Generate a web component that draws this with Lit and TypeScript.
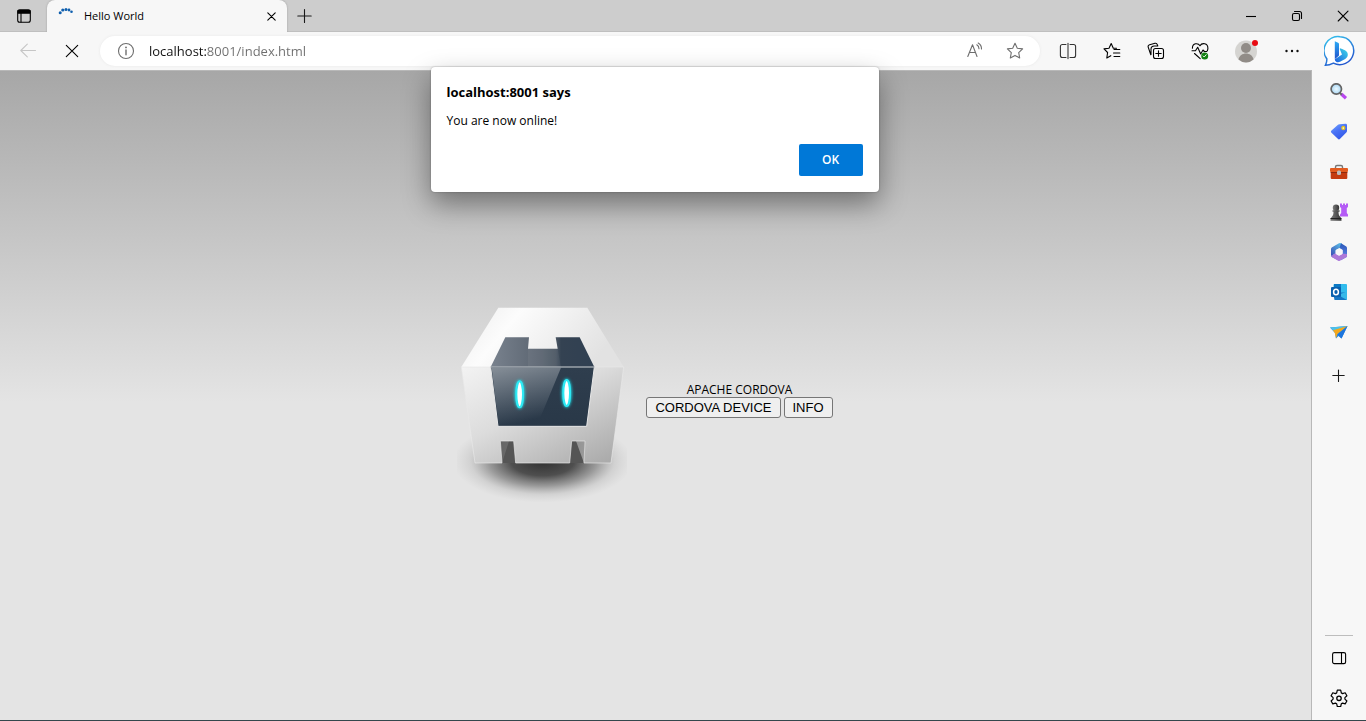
import { LitElement, html, svg, css } from "lit";
import { customElement } from "lit/decorators.js";

const icon = (size: number, body: unknown) => html`<svg
  width=${size} height=${size} viewBox="0 0 ${size} ${size}" fill="none"
  stroke="currentColor" stroke-width="1.1" stroke-linecap="round" stroke-linejoin="round"
  aria-hidden="true">${body}</svg>`;

const starPath = "M10 2.3 12.3 7.2 17.6 7.9 13.7 11.6 14.7 17 10 14.4 5.3 17 6.3 11.6 2.4 7.9 7.7 7.2Z";

const icons = {
  tabActions: icon(16, svg`<rect x="1.7" y="1.7" width="12.6" height="12.6" rx="2"/><path d="M2 2.5h12v2.6H2z" fill="currentColor"/><path d="M5 5v9"/>`),
  spinner: svg`<svg width="16" height="16" viewBox="0 0 16 16" fill="#0f5fae" aria-hidden="true"><circle cx="2.200" cy="4.800" r="1.500"/><circle cx="4.800" cy="2" r="1.600"/><circle cx="8" cy="1.600" r="1.500"/><circle cx="11" cy="2" r="1.400"/><circle cx="13.500" cy="3.800" r="1.300"/></svg>`,
  closeTab: icon(16, svg`<path d="M4.800 4.800l7.400 7.400M12.200 4.800l-7.400 7.400"/>`),
  plus: icon(16, svg`<path d="M7.500 1.500v13M.800 8h13.400" stroke="#1a1a1a"/>`),
  smallPlus: icon(16, svg`<path d="M7.500 2v11.500M1.800 7.500h11.400" stroke="#1a1a1a"/>`),
  minimise: icon(16, svg`<path d="M3 8.500h10" stroke-linecap="butt"/>`),
  restore: icon(16, svg`<rect x="3.500" y="5.500" width="7" height="7" rx="1.500"/><path d="M5.500 3.500h5a2 2 0 0 1 2 2v5"/>`),
  closeWindow: icon(16, svg`<path d="M3.200 3.200l9.800 9.800M13 3.200l-9.800 9.800"/>`),
  back: icon(16, svg`<path d="M15.500 7.500H.8M7.300 1.200.8 7.500l6.500 6.300" stroke="#c6c6c6"/>`),
  stop: icon(16, svg`<path d="M2.300 2.300l11.400 11.400M13.700 2.300 2.300 13.700"/>`),
  info: icon(18, svg`<g stroke="#6e6e6e"><circle cx="9" cy="9" r="7.500"/><path d="M9 8v4.700" stroke-width="1.400"/><circle cx="9" cy="5.400" r=".4"/></g>`),
  readAloud: icon(20, svg`<g stroke="#6e6e6e"><path d="M2.800 15.500 7.500 3.800 12 15.500M4.300 11.500h6.200"/><path d="M11.800 3.800c1.500.9 2.200 2.200 2.200 3.900M13.200 2c2.300 1.300 3.300 3.400 3.300 5.900"/></g>`),
  star: icon(20, svg`<path stroke="#6e6e6e" d=${starPath}/>`),
  split: icon(20, svg`<path d="M8 3.500H4.400a2 2 0 0 0-2 2v9a2 2 0 0 0 2 2H8M12 3.500h3.600a2 2 0 0 1 2 2v9a2 2 0 0 1-2 2H12" stroke="#333"/><path d="M10 2.500v15" stroke="#6a6a6a" stroke-width="1.500"/>`),
  favourites: icon(20, svg`<path d="M14.500 7.300 11.300 7.200 9.200 2.500 7 7.200 2 7.900 5.600 11.500 4.800 17 8.800 14.700M12 8.500h5.800M11.500 12h6.300M12 15.500h5.800"/>`),
  collections: icon(20, svg`<rect x="7.500" y="7.500" width="10" height="10" rx="2"/><path d="M12.500 9.800v5.400M9.800 12.500h5.400M4.800 13.800 2.200 6.100C1.800 4.800 2.600 4 3.600 3.700L9 2.300c1.300-.3 2 .3 2.400 1.500l.4 1.200H8.300C6 5 5 6.300 5 8.200v5.300"/>`),
  health: icon(20, svg`<path d="M2.400 7.200C2.500 1.700 8.200 1.700 10 4.800 11.800 1.500 18 1.700 17.900 7.400c0 .9-.3 1.700-.7 2.500M2 9.700h3.500l2.200-3.400 3 6.700 2.300-4 1.400 1.500h2.100M4.500 12.500l5.700 5.200"/><circle cx="14.700" cy="15" r="3.500" fill="#138113" stroke="none"/><path d="m13.200 15 1 1 2-2.300" stroke="#fff" stroke-width=".9"/>`),
  profile: svg`<svg width="24" height="24" viewBox="0 0 24 24" aria-hidden="true"><circle cx="12" cy="12.500" r="11" fill="#d5d4d1"/><circle cx="12" cy="9" r="5" fill="#918c87"/><path d="M4.500 20.500c1.500-8 13.500-8 15 0a11 11 0 0 1-15 0z" fill="#918c87"/><circle cx="21" cy="4" r="3" fill="#e80b12"/></svg>`,
  more: svg`<svg width="16" height="16" viewBox="0 0 16 16" fill="#111" aria-hidden="true"><circle cx="2.500" cy="8" r="1.200"/><circle cx="8" cy="8" r="1.200"/><circle cx="13.500" cy="8" r="1.200"/></svg>`,
  bing: svg`<svg width="32" height="32" viewBox="0 0 32 32" aria-hidden="true">
    <defs><linearGradient id="bg" x1="0" y1="0" x2=".5" y2="1"><stop stop-color="#35c7ee"/><stop offset="1" stop-color="#2459cf"/></linearGradient>
    <linearGradient id="bl" x1="0" y1="0" x2="0" y2="1"><stop stop-color="#2baaf5"/><stop offset="1" stop-color="#2052cb"/></linearGradient>
    <linearGradient id="bt" x1="0" y1="1" x2="1" y2="0"><stop stop-color="#1b5be0"/><stop offset="1" stop-color="#3edce8"/></linearGradient></defs>
    <path d="M16 1.700a14 14 0 1 1-6.600 26.500c-2.300 1.200-5 2.100-8 2.100 1.300-2.500 1.500-4.300 1.500-6.300A14 14 0 0 1 16 1.700z" fill="#fff" stroke="url(#bg)" stroke-width="1.500"/>
    <path d="m10.800 6.300 3.300 1.500c.6.300.9.700.9 1.300v10.800c0 .5-.1.800-.5 1.200l-3.700 3.100z" fill="url(#bl)"/>
    <path d="M10.800 24.200 18 19.500l-2.200-5.300c-.2-.7.200-1 .8-.8 4.800 1.500 7.200 3 7.200 6.200 0 2-.9 3.400-2.600 4.400L16 26.800c-2 1.100-5 .4-5.200-2.600z" fill="url(#bt)"/></svg>`,
  panel: icon(16, svg`<rect x="1.600" y="2.600" width="13" height="11" rx="1.700"/><path d="M10.500 3v10.500"/>`),
  gear: icon(20, svg`<path d="M8.300 2.200h3.400l.6 2.700 1.300.7 2.600-.8 1.700 2.900-2 1.900v1.500l2 1.900-1.700 2.900-2.600-.8-1.300.7-.6 2.700H8.300l-.6-2.700-1.300-.7-2.600.8L2.100 13l2-1.900V9.600l-2-1.900 1.700-2.900 2.600.8 1.300-.7z" stroke-width="1.200"/><circle cx="10" cy="10.300" r="2.200" stroke-width="1.300"/>`),
};

const art = (body: unknown) => html`<svg width="18" height="18" viewBox="0 0 18 18" aria-hidden="true">${body}</svg>`;

const apps = [
  { name: "Search", art: art(svg`<defs><radialGradient id="lens"><stop stop-color="#eefaff"/><stop offset="1" stop-color="#a7d6f4"/></radialGradient></defs><path d="m11.300 11 4.700 4.300" stroke="#b947ef" stroke-width="3.200"/><path d="m9.800 9.700 2 2" stroke="#666" stroke-width="2"/><circle cx="6.300" cy="6" r="5.200" fill="url(#lens)" stroke="#656565" stroke-width="1.700"/>`) },
  { name: "Shopping", art: art(svg`<defs><linearGradient id="tag" x1="0" y1="0" x2=".6" y2="1"><stop stop-color="#77a9ff"/><stop offset=".5" stop-color="#4a73f6"/><stop offset="1" stop-color="#3459e8"/></linearGradient></defs><path d="M9.500 1.200 15.500.8c1 0 1.500.5 1.500 1.500v5.500c0 .7-.2 1.200-.7 1.700l-6.200 6.300c-.8.8-1.500.8-2.300 0L1.500 9.800c-.8-.8-.8-1.400 0-2.200l6.200-5.700c.5-.5 1-.7 1.800-.7z" fill="url(#tag)"/><circle cx="13.300" cy="5" r="1.500" fill="#f7f7f7" stroke="#e3c11c" stroke-width="1.300"/>`) },
  { name: "Tools", art: art(svg`<path d="M5.500 6V4q0-1.500 1.500-1.500h4Q12.500 2.500 12.500 4v2" fill="none" stroke="#777" stroke-width="1.400"/><rect y="5" width="18" height="4" rx="1" fill="#e25b1f"/><path d="M.7 9h16.600v6q0 1-1 1H1.700q-1 0-1-1z" fill="#c43b10"/><path d="M.7 9h16.600v1H.7z" fill="#8e290c"/><rect x="7" y="7.500" width="4" height="4.500" rx="1.500" fill="#bbb"/>`) },
  { name: "Games", art: art(svg`<defs><linearGradient id="pawn"><stop stop-color="#7b7b7b"/><stop offset="1" stop-color="#333"/></linearGradient></defs><path d="M10 .5h2V2h1V.5h2V2h1V.500h2v3.500l-1.200 1v5l1.200 1.500v2h-8v-2l1.200-1.500V5L10 4z" fill="#b55cf6"/><circle cx="6" cy="4.700" r="3.200" fill="url(#pawn)"/><path d="M2.500 7.200h7v1.500h-1c0 2.500.5 4 2 5.500.9.900 1 1.500 1 3.500H.5c0-2 .1-2.600 1-3.500 1.500-1.500 2-3 2-5.500h-1z" fill="url(#pawn)"/><path d="M.5 15.500h11" stroke="#222"/>`) },
  { name: "Microsoft 365", art: art(svg`<defs><linearGradient id="ma" x1="0" y1="1" x2="1" y2="0"><stop stop-color="#3a4db4"/><stop offset="1" stop-color="#5cc5ea"/></linearGradient><linearGradient id="mb"><stop stop-color="#7f61cf"/><stop offset="1" stop-color="#c79af0"/></linearGradient><linearGradient id="mc" x1="0" y1="0" x2="0" y2="1"><stop stop-color="#2857b8"/><stop offset="1" stop-color="#6e8df0"/></linearGradient></defs><path d="M9 .3 1.700 4.500Q1 5 1 6v7l4.500-2.500V7.200L12 3.500V.800Q10.500-.4 9 .3z" fill="url(#ma)"/><path d="M1 11v1.500q0 1 .8 1.500L8 17.600q1 .6 2 0l4.500-2.600-3-3L9 13 5 10.500 1 13z" fill="url(#mb)"/><path d="M11 .3 16.300 3.500Q17 4 17 5v8q0 .8-.7 1.200L11 17.300l-1-3 2.800-3.500V7L9.500 5z" fill="url(#mc)"/><path d="M5 10.500 9 13l3.800-2.200L17 11v2q0 .8-.7 1.200L10 17.600q-1 .6-2 0L1.800 14z" fill="#ad79d8"/><circle cx="9" cy="9" r="3.200" fill="#f7f7f7"/>`) },
  { name: "Outlook", art: art(svg`<path d="M4.500 1H16q1 0 1 1v9H3.500V2q0-1 1-1z" fill="#32bced"/><path d="M4 1h7v5H4z" fill="#0b78c4"/><path d="M3 9.500h14V16q0 1-1 1H4.500z" fill="#1475c4"/><path d="m8 12 9-3.500V17z" fill="#36b9e9"/><rect x="1" y="4" width="10" height="10" rx="1" fill="#0960ae"/><ellipse cx="6" cy="9" rx="2.400" ry="2.800" fill="none" stroke="#fff" stroke-width="1.500"/>`) },
  { name: "Drop", art: art(svg`<path d="M0 4.500 17.500 3 11.500 15.500 8.500 13 6 15.500 5 10z" fill="#258be8"/><path d="M0 4.500 17.500 3 5 9z" fill="#4dc2e9"/><path d="m3 7.300 14.500-4.300-10 8L6 15.500 4.800 10z" fill="#f4a81d"/><path d="M17.500 3 7.500 11.500l4 4z" fill="#1d75dd"/>`) },
];

const cordovaLogo = html`<svg width="170" height="200" viewBox="52 31 510 600" role="img" aria-label="Cordova">
  <defs>
    <linearGradient id="top" x1="0" y1="0" x2="1" y2=".3"><stop stop-color="#ececec"/><stop offset=".35" stop-color="#fcfcfc"/><stop offset="1" stop-color="#e2e2e2"/></linearGradient>
    <linearGradient id="front" x1="0" y1="0" x2=".9" y2="1"><stop stop-color="#f3f3f3"/><stop offset=".45" stop-color="#dcdcdc"/><stop offset="1" stop-color="#aaaaaa"/></linearGradient>
    <linearGradient id="visor"><stop stop-color="#79828e"/><stop offset=".5" stop-color="#59636f"/><stop offset=".63" stop-color="#4a5663"/><stop offset=".68" stop-color="#344252"/><stop offset="1" stop-color="#304052"/></linearGradient>
    <linearGradient id="face" x1="0" y1="0" x2="0" y2="1"><stop stop-color="#2f3e4e"/><stop offset="1" stop-color="#293848"/></linearGradient>
    <linearGradient id="gloss" x1="0" y1="0" x2=".3" y2="1"><stop stop-color="#fff" stop-opacity=".42"/><stop offset="1" stop-color="#fff" stop-opacity="0"/></linearGradient>
    <linearGradient id="leg"><stop stop-color="#666"/><stop offset="1" stop-color="#999"/></linearGradient>
    <radialGradient id="shadow"><stop stop-color="#303030"/><stop offset=".35" stop-color="#3a3a3a" stop-opacity=".88"/><stop offset=".6" stop-color="#505050" stop-opacity=".5"/><stop offset=".8" stop-color="#707070" stop-opacity=".16"/><stop offset="1" stop-color="#909090" stop-opacity="0"/></radialGradient>
    <filter id="glow" x="-2" y="-.5" width="5" height="2"><feGaussianBlur stdDeviation="5"/></filter>
    <filter id="soft" x="-.5" y="-.1" width="2" height="1.200"><feGaussianBlur stdDeviation="2"/></filter>
  </defs>
  <ellipse cx="309" cy="500" rx="270" ry="124" fill="url(#shadow)"/>
  <path d="M182 439h42l6 66h-44zM394 439h42l-2 66h-46z" fill="#555"/>
  <path d="M182 439h26l-21 66zM436 439h-27l24 66z" fill="url(#leg)"/>
  <path d="M176 39H443L552 217H65z" fill="url(#top)"/>
  <path d="M65 217H552L514 505H433L436 439H396L390 505H228L222 439H182L187 505H106z" fill="url(#front)" stroke="#e8e8e8" stroke-width="2"/>
  <path d="M197 128H268L265 162H354L348 128H420L464 217H153z" fill="url(#visor)"/>
  <path d="M265 162h89l10 55H265z" fill="#fff" opacity=".05"/>
  <path d="M153 217H464L441 395H175z" fill="url(#face)" stroke="#e8e8e8" stroke-width="3"/>
  <path d="M156 219H364L293 390H177z" fill="url(#gloss)"/>
  <path d="M153 217H464" stroke="#6a7683" stroke-width="2"/>
  <g fill="#1ee4f2" filter="url(#glow)"><ellipse cx="240" cy="299" rx="15" ry="43"/><ellipse cx="381" cy="295" rx="15" ry="43"/></g>
  <g fill="#fff" stroke="#2eeaf5" stroke-width="6" filter="url(#soft)"><ellipse cx="240" cy="299" rx="10" ry="39"/><ellipse cx="381" cy="295" rx="10" ry="39"/></g>
</svg>`;

@customElement("app-root")
export class AppRoot extends LitElement {
  static styles = css`
    :host {
      display: flex;
      flex-direction: column;
      height: 100vh;
      box-sizing: border-box;
      border-bottom: 1px solid #34474c;
      background: #f7f7f7;
      color: #000;
      font: 12px/16px "Segoe UI", "Open Sans", sans-serif;
    }
    svg { display: block; flex: none; }
    button { font: inherit; color: inherit; }
    .icon-button {
      display: flex;
      align-items: center;
      justify-content: center;
      flex: none;
      width: 44px;
      height: 32px;
      padding: 0;
      border: 0;
      background: none;
    }
    .tabs {
      display: flex;
      flex: none;
      height: 32px;
      background: #cdcdcd;
      box-shadow: inset 0 -1px #bfbfbf;
    }
    .tab-actions { width: 47px; }
    .tab {
      display: flex;
      align-items: center;
      flex: 0 1 240px;
      box-sizing: border-box;
      padding-left: 11px;
      border-radius: 8px 8px 0 0;
      background: #f7f7f7;
      box-shadow: 0 0 2px #999;
      clip-path: inset(0 -3px 0 -3px);
      font-size: 11px;
    }
    .tab-title { flex: 1; padding-left: 10px; }
    .tab-close { width: 32px; }
    .new-tab { width: 36px; }
    .window-controls { display: flex; margin-left: auto; }
    .window-controls .icon-button { width: 46px; }
    .toolbar {
      display: flex;
      align-items: center;
      flex: none;
      height: 38px;
      background: #f7f7f7;
    }
    .back { margin-left: 6px; }
    .address {
      display: flex;
      align-items: center;
      flex: 1;
      min-width: 0;
      height: 30px;
      margin: 0 6px;
      padding: 0 5px 0 17px;
      border-radius: 15px;
      background: #fff;
      box-shadow: 0 0 3px #e8e8e8;
    }
    .address .icon-button { width: 40px; height: 30px; }
    .address .site-info { width: 18px; }
    .url {
      flex: 1;
      min-width: 0;
      padding: 0;
      margin-left: 14px;
      border: 0;
      outline: 0;
      font: 13px/20px "Segoe UI", "Open Sans", sans-serif;
      color: transparent;
      background: linear-gradient(to right, #111 58px, #6e6e6e 58px);
      background-clip: text;
      -webkit-background-clip: text;
    }
    .profile { width: 48px; }
    .side-column { width: 52px; }
    .body { display: flex; flex: 1; min-height: 0; }
    .page {
      position: relative;
      display: flex;
      align-items: center;
      justify-content: center;
      flex: 1;
      box-sizing: border-box;
      padding: 18px 2px 0 0;
      border: 1px solid #b8b8b8;
      border-width: 1px 1px 0 0;
      background: linear-gradient(to bottom, #a7a7a7 0%, #e4e4e4 51%);
    }
    .details { width: 225px; text-align: center; }
    .heading { margin: 0; font-size: 12px; font-weight: 400; line-height: 14px; }
    .actions { display: flex; justify-content: center; gap: 3px; padding-bottom: 8px; }
    .action {
      height: 21px;
      padding: 0 8px;
      border: 1px solid #767676;
      border-radius: 3px;
      background: #efefef;
      font: 13px/19px "Liberation Sans", Arial, sans-serif;
    }
    .alert-layer {
      position: absolute;
      inset: -4px 2px auto 0;
      display: flex;
      justify-content: center;
    }
    .alert {
      box-sizing: border-box;
      width: 448px;
      max-width: 100%;
      padding: 16px;
      border-radius: 4px;
      background: #fff;
      box-shadow: 0 0 2px rgba(0, 0, 0, 0.3), 0 12px 28px rgba(0, 0, 0, 0.4);
    }
    .alert-title { margin: 0; font-size: 13px; line-height: 18px; font-weight: 700; }
    .alert-text { margin: 10px 0 13px; line-height: 20px; }
    .alert-actions { display: flex; justify-content: flex-end; }
    .ok {
      width: 64px;
      height: 32px;
      padding: 0;
      border: 0;
      border-radius: 2px;
      background: #0078d7;
      color: #fff;
      font-weight: 600;
    }
    .sidebar {
      display: flex;
      flex-direction: column;
      align-items: center;
      flex: none;
      width: 54px;
      padding-top: 2px;
      box-sizing: border-box;
    }
    .sidebar .icon-button { height: 40px; }
    .sidebar .add { margin-top: 4px; }
    .divider { width: 28px; height: 1px; margin: auto 0 2px; border: 0; background: #bdbdbd; }
    .settings { margin-bottom: 2px; }
  `;

  render() {
    return html`
      <header class="tabs">
        <button class="icon-button tab-actions" aria-label="Tab actions">${icons.tabActions}</button>
        <div class="tab">
          ${icons.spinner}
          <span class="tab-title">Hello World</span>
          <button class="icon-button tab-close" aria-label="Close tab">${icons.closeTab}</button>
        </div>
        <button class="icon-button new-tab" aria-label="New tab">${icons.plus}</button>
        <div class="window-controls">
          <button class="icon-button" aria-label="Minimise">${icons.minimise}</button>
          <button class="icon-button" aria-label="Restore">${icons.restore}</button>
          <button class="icon-button" aria-label="Close">${icons.closeWindow}</button>
        </div>
      </header>
      <nav class="toolbar">
        <button class="icon-button back" aria-label="Back" disabled>${icons.back}</button>
        <button class="icon-button" aria-label="Stop">${icons.stop}</button>
        <div class="address">
          <button class="icon-button site-info" aria-label="Site information">${icons.info}</button>
          <input class="url" aria-label="Address" .value=${"localhost:8001/index.html"} />
          <button class="icon-button" aria-label="Read aloud">${icons.readAloud}</button>
          <button class="icon-button" aria-label="Add to favourites">${icons.star}</button>
        </div>
        <button class="icon-button" aria-label="Split screen">${icons.split}</button>
        <button class="icon-button" aria-label="Favourites">${icons.favourites}</button>
        <button class="icon-button" aria-label="Collections">${icons.collections}</button>
        <button class="icon-button" aria-label="Browser essentials">${icons.health}</button>
        <button class="icon-button profile" aria-label="Profile">${icons.profile}</button>
        <button class="icon-button" aria-label="Settings and more">${icons.more}</button>
        <button class="icon-button side-column" aria-label="Bing">${icons.bing}</button>
      </nav>
      <div class="body">
        <main class="page">
          ${cordovaLogo}
          <section class="details">
            <h1 class="heading">APACHE CORDOVA</h1>
            <div class="actions">
              <button class="action">CORDOVA DEVICE</button>
              <button class="action">INFO</button>
            </div>
          </section>
          <div class="alert-layer">
            <div class="alert" role="alertdialog" aria-labelledby="alert-title" aria-describedby="alert-text">
              <h2 class="alert-title" id="alert-title">localhost:8001 says</h2>
              <p class="alert-text" id="alert-text">You are now online!</p>
              <div class="alert-actions"><button class="ok">OK</button></div>
            </div>
          </div>
        </main>
        <aside class="sidebar">
          ${apps.map((app) => html`<button class="icon-button" aria-label=${app.name}>${app.art}</button>`)}
          <button class="icon-button add" aria-label="Add">${icons.smallPlus}</button>
          <hr class="divider" />
          <button class="icon-button" aria-label="Hide sidebar">${icons.panel}</button>
          <button class="icon-button settings" aria-label="Settings">${icons.gear}</button>
        </aside>
      </div>
    `;
  }
}
